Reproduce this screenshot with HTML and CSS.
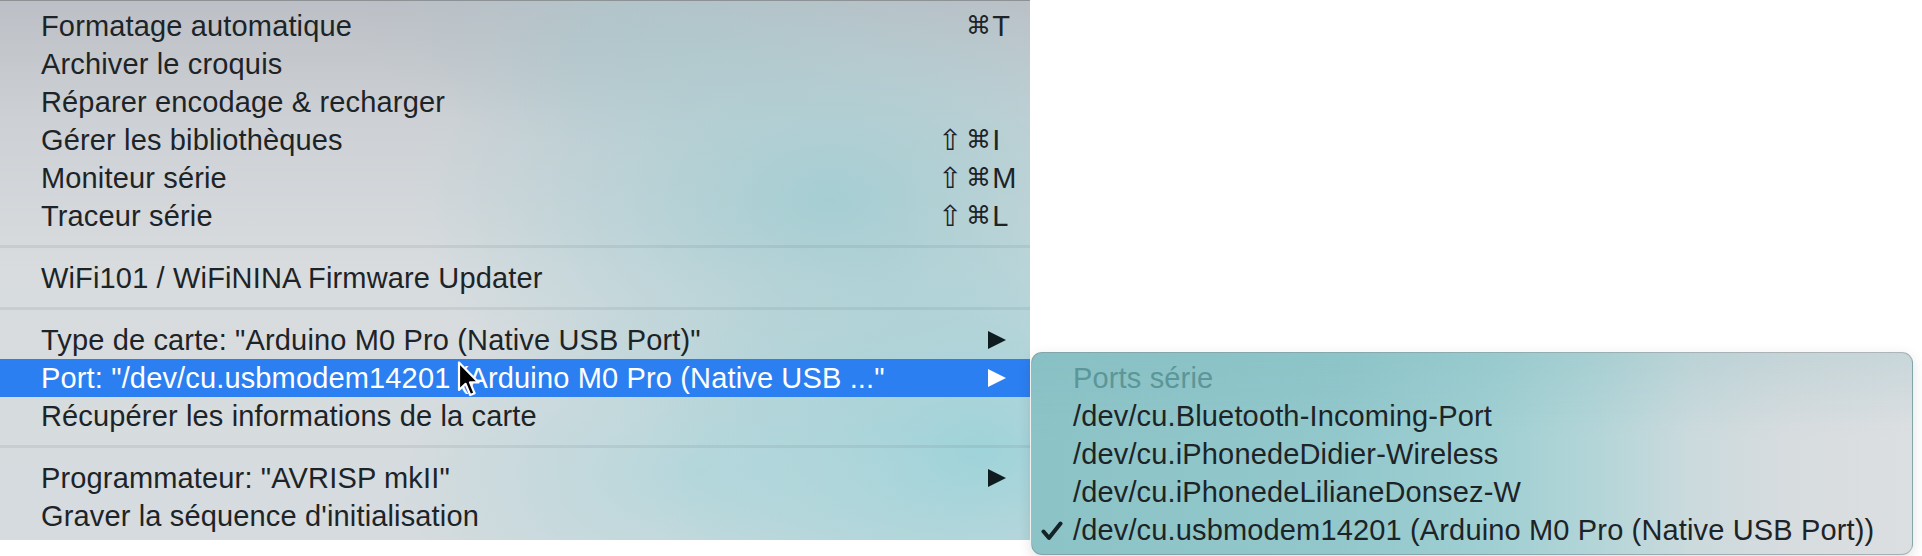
FILE: index.html
```html
<!DOCTYPE html>
<html lang="fr">
<head>
<meta charset="utf-8">
<title>Menu Outils</title>
<link rel="stylesheet" href="styles.css">
</head>
<body>
<div class="stage">
  <div class="menu">
    <div class="item"><span class="label">Formatage automatique</span><span class="keys"><span class="shift"></span><span class="cmd">⌘</span><span class="key">T</span></span></div>
    <div class="item"><span class="label">Archiver le croquis</span></div>
    <div class="item"><span class="label">Réparer encodage &amp; recharger</span></div>
    <div class="item"><span class="label">Gérer les bibliothèques</span><span class="keys"><span class="shift">⇧</span><span class="cmd">⌘</span><span class="key">I</span></span></div>
    <div class="item"><span class="label">Moniteur série</span><span class="keys"><span class="shift">⇧</span><span class="cmd">⌘</span><span class="key">M</span></span></div>
    <div class="item"><span class="label">Traceur série</span><span class="keys"><span class="shift">⇧</span><span class="cmd">⌘</span><span class="key">L</span></span></div>
    <div class="sep"></div>
    <div class="item"><span class="label">WiFi101 / WiFiNINA Firmware Updater</span></div>
    <div class="sep"></div>
    <div class="item"><span class="label">Type de carte: "Arduino M0 Pro (Native USB Port)"</span><span class="arrow"></span></div>
    <div class="item selected"><span class="label">Port: "/dev/cu.usbmodem14201 (Arduino M0 Pro (Native USB ..."</span><span class="arrow"></span></div>
    <div class="item"><span class="label">Récupérer les informations de la carte</span></div>
    <div class="sep"></div>
    <div class="item"><span class="label">Programmateur: "AVRISP mkII"</span><span class="arrow"></span></div>
    <div class="item"><span class="label">Graver la séquence d'initialisation</span></div>
  </div>

  <div class="submenu">
    <div class="item header"><span class="label">Ports série</span></div>
    <div class="item"><span class="label">/dev/cu.Bluetooth-Incoming-Port</span></div>
    <div class="item"><span class="label">/dev/cu.iPhonedeDidier-Wireless</span></div>
    <div class="item"><span class="label">/dev/cu.iPhonedeLilianeDonsez-W</span></div>
    <div class="item checked"><svg class="check" width="22" height="20" viewBox="0 0 22 20"><polyline points="2.5,10.5 8,17 19.5,2.5" fill="none" stroke="#122428" stroke-width="4" stroke-linecap="round" stroke-linejoin="round"/></svg><span class="label">/dev/cu.usbmodem14201 (Arduino M0 Pro (Native USB Port))</span></div>
  </div>

  <svg class="cursor" width="26" height="38" viewBox="0 0 26 38"><path d="M2 1.5 L2 29 L8.6 22.8 L13.2 34 L17.6 32.2 L13 21.4 L21.6 21.4 Z" fill="#000" stroke="#fff" stroke-width="2.2" stroke-linejoin="round"/></svg>
</div>
</body>
</html>
```

FILE: styles.css
```css
html, body {
  margin: 0;
  padding: 0;
  background: #ffffff;
}

.stage {
  position: relative;
  width: 1922px;
  height: 556px;
  overflow: hidden;
  font-family: "Liberation Sans", Arial, sans-serif;
  font-size: 29px;
  letter-spacing: 0.15px;
  color: #1d2427;
}

.menu {
  width: 1030px;
  height: 540px;
  box-sizing: border-box;
  border-top: 1px solid #8d9296;
  padding: 6px 0 5px;
  display: flex;
  flex-direction: column;
  background:
    radial-gradient(ellipse 520px 330px at 830px 200px, rgba(160, 205, 210, 0.9), rgba(160, 205, 210, 0) 80%),
    radial-gradient(ellipse 420px 300px at 980px 450px, rgba(155, 211, 217, 0.95), rgba(155, 211, 217, 0) 80%),
    radial-gradient(ellipse 380px 220px at 700px 470px, rgba(172, 214, 219, 0.75), rgba(172, 214, 219, 0) 80%),
    radial-gradient(ellipse 320px 160px at 620px 20px, rgba(175, 198, 203, 0.7), rgba(175, 198, 203, 0) 80%),
    linear-gradient(180deg, #bcbfc5 0%, #cdd1d5 22%, #d8dcdf 50%, #d5dbde 100%);
}

.item {
  height: 38px;
  flex: 0 0 38px;
  display: flex;
  align-items: center;
  padding-left: 41px;
  line-height: 38px;
  white-space: nowrap;
}

.item .label {
  flex: 1;
}

.keys {
  width: 92px;
  display: flex;
  align-items: center;
}

.shift {
  width: 28px;
  flex: 0 0 28px;
  font-family: "DejaVu Sans", sans-serif;
  font-size: 29px;
  line-height: 38px;
}

.cmd {
  flex: 0 0 auto;
  margin-right: 1px;
  font-family: "DejaVu Sans", sans-serif;
  font-size: 25px;
  line-height: 38px;
}

.key {
  flex: 0 0 auto;
}

.arrow {
  width: 0;
  height: 0;
  margin-right: 24px;
  border-left: 18px solid #0f1b1e;
  border-top: 9.5px solid transparent;
  border-bottom: 9.5px solid transparent;
}

.sep {
  flex: 0 0 24px;
  height: 24px;
  display: flex;
  align-items: center;
}

.sep::before {
  content: "";
  display: block;
  width: 100%;
  height: 3px;
  margin-top: -1px;
  background: rgba(90, 110, 118, 0.12);
}

.item.selected {
  background: #2c7ff1;
  color: #ffffff;
}

.item.selected .arrow {
  border-left-color: #ffffff;
}

.submenu {
  position: absolute;
  left: 1031px;
  top: 352px;
  width: 882px;
  height: 203px;
  box-sizing: border-box;
  padding-top: 6px;
  border-radius: 11px;
  border: 1px solid rgba(120, 130, 135, 0.45);
  background:
    linear-gradient(180deg, rgba(120, 180, 186, 0.2) 0%, rgba(120, 180, 186, 0) 40%),
    linear-gradient(90deg, #8cc3c7 0%, #92c8cc 35%, #9fcfd2 52%, #b3d5d8 64%, #cbdadd 75%, #d7dcdf 86%, #dcdfe2 100%);
  box-shadow: 0 4px 14px rgba(0, 0, 0, 0.12);
}

.submenu .item {
  position: relative;
  padding-left: 41px;
}

.submenu .header {
  color: #5c9698;
}

.check {
  position: absolute;
  left: 9px;
  top: 10px;
}

.cursor {
  position: absolute;
  left: 457px;
  top: 361px;
}
```
